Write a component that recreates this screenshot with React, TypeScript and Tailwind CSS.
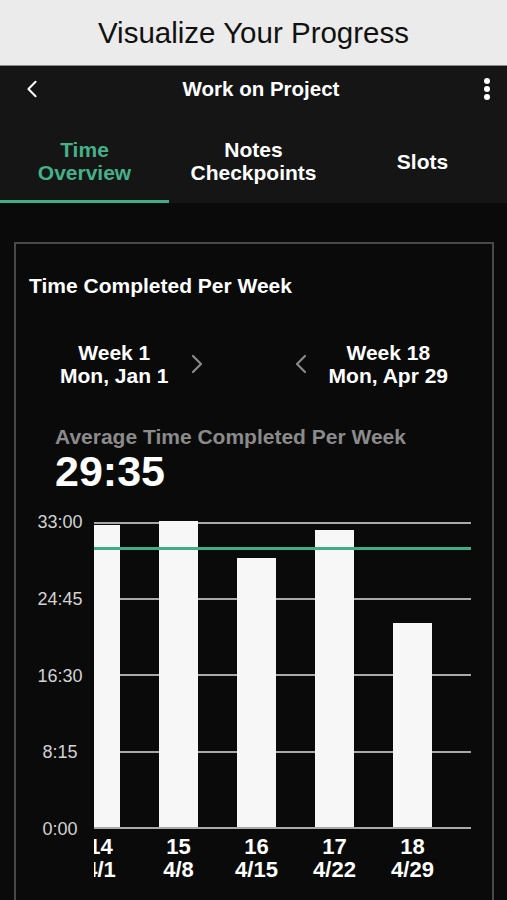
import React from "react";

const FONT = { fontFamily: '"Liberation Sans", Arial, sans-serif' };

type Week = { num: number; date: string; seconds: number };

const WEEKS: Week[] = [
  { num: 14, date: "4/1", seconds: 1960 },
  { num: 15, date: "4/8", seconds: 1986 },
  { num: 16, date: "4/15", seconds: 1746 },
  { num: 17, date: "4/22", seconds: 1928 },
  { num: 18, date: "4/29", seconds: 1324 },
];

const MAX_SECONDS = 1980;
const PLOT_H = 305;
const TARGET_SECONDS = 1805;
const GRID = [0, 76, 152, 229, 305];
const Y_LABELS = ["33:00", "24:45", "16:30", "8:15", "0:00"];

function Chevron({ dir, className }: { dir: "left" | "right"; className?: string }) {
  return (
    <svg viewBox="0 0 12 20" className={className} fill="none" stroke="currentColor" strokeWidth="2.2" strokeLinecap="round" strokeLinejoin="round">
      {dir === "left" ? <path d="M10 2 L2 10 L10 18" /> : <path d="M2 2 L10 10 L2 18" />}
    </svg>
  );
}

function WeekChart() {
  return (
    <div className="flex items-start mt-[29px]">
      {/* y axis */}
      <div className="ml-[20px] w-[48px] mr-[10px] -mt-[10px] h-[327px] flex flex-col justify-between items-center text-[18px] leading-[20px] text-[#d2d2d2]">
        {Y_LABELS.map((l) => (
          <span key={l}>{l}</span>
        ))}
      </div>
      {/* plot */}
      <div className="relative w-[377px] overflow-x-clip">
        {GRID.map((t) => (
          <div key={t} className="absolute left-0 right-0 h-[2px] bg-[#a9a9a9]" style={{ top: t }} />
        ))}
        <div className="relative flex -ml-[32.5px]">
          {WEEKS.map((w) => (
            <div key={w.num} className="w-[78px] shrink-0 flex flex-col items-center">
              <div className="h-[305px] flex items-end">
                <div className="w-[39px] bg-[#f7f7f7]" style={{ height: (w.seconds / MAX_SECONDS) * PLOT_H }} />
              </div>
              <div className="mt-[8px] text-center text-[22px] leading-[23px] font-bold text-white">
                <div>{w.num}</div>
                <div>{w.date}</div>
              </div>
            </div>
          ))}
        </div>
        <div
          className="absolute left-0 right-0 h-[3px] bg-[#3fae85]"
          style={{ top: PLOT_H - (TARGET_SECONDS / MAX_SECONDS) * PLOT_H - 1.5 }}
        />
      </div>
    </div>
  );
}

export default function App() {
  return (
    <div style={FONT} className="w-[507px] min-h-[900px] bg-[#0a0a0a]">
      {/* caption */}
      <div className="h-[66px] bg-[#ebebeb] border-b border-[#8a8a8a] flex items-center justify-center">
        <h1 className="text-[29.5px] text-[#111] pt-[2px]">Visualize Your Progress</h1>
      </div>

      {/* nav bar */}
      <div className="bg-[#151515]">
        <div className="h-[44px] flex items-center pl-[26px] pr-[17px] text-white">
          <Chevron dir="left" className="w-[12px] h-[18px] mt-[1px]" />
          <div className="flex-1 text-center text-[20.5px] font-bold pt-[2px]">Work on Project</div>
          <div className="w-[6px] flex flex-col gap-[2px] mt-[1px]">
            <span className="block w-[6px] h-[6px] rounded-full bg-white" />
            <span className="block w-[6px] h-[6px] rounded-full bg-white" />
            <span className="block w-[6px] h-[6px] rounded-full bg-white" />
          </div>
        </div>
        <div className="grid grid-cols-3 h-[93px]">
          <div className="flex flex-col">
            <div className="mt-[28px] h-[46px] flex items-center justify-center text-center text-[21px] leading-[23px] font-bold text-[#44b189]">
              Time
              <br />
              Overview
            </div>
            <div className="mt-auto h-[3px] bg-[#3fae85]" />
          </div>
          <div className="flex flex-col">
            <div className="mt-[28px] h-[46px] flex items-center justify-center text-center text-[21px] leading-[23px] font-bold text-white">
              Notes
              <br />
              Checkpoints
            </div>
          </div>
          <div className="flex flex-col">
            <div className="mt-[28px] h-[46px] flex items-center justify-center text-center text-[21px] leading-[23px] font-bold text-white">
              Slots
            </div>
          </div>
        </div>
      </div>

      {/* content */}
      <div className="pt-[39px] pl-[14px] pr-[13px]">
        <div className="border-2 border-b-0 border-[#494949] min-h-[660px] pt-[30px]">
          <h2 className="pl-[13px] text-[21px] leading-[24px] font-bold text-white">Time Completed Per Week</h2>

          <div className="mt-[43px] flex items-center pl-[44px] pr-[44px] text-white">
            <div className="text-center text-[21px] leading-[23px] font-bold">
              <div>Week 1</div>
              <div>Mon, Jan 1</div>
            </div>
            <Chevron dir="right" className="ml-[22px] w-[12px] h-[20px] text-[#8a8a8a]" />
            <Chevron dir="left" className="ml-auto mr-[22px] w-[12px] h-[20px] text-[#8a8a8a]" />
            <div className="text-center text-[21px] leading-[23px] font-bold">
              <div>Week 18</div>
              <div>Mon, Apr 29</div>
            </div>
          </div>

          <div className="mt-[38px] pl-[39px]">
            <div className="text-[21px] leading-[24px] font-bold text-[#8b8b8b]">Average Time Completed Per Week</div>
            <div className="text-[43px] leading-[44px] font-bold text-white">29:35</div>
          </div>

          <WeekChart />
        </div>
      </div>
    </div>
  );
}
